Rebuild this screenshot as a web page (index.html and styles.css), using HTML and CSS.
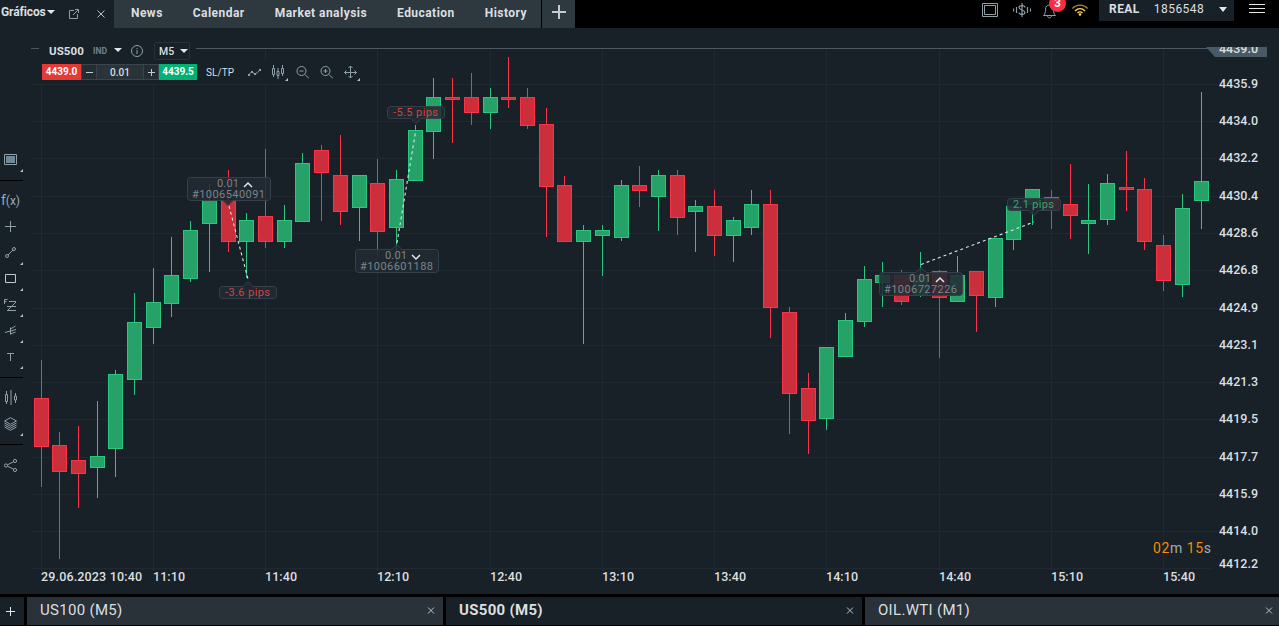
FILE: index.html
```
<!DOCTYPE html>
<html lang="es">

<head>
    <meta charset="UTF-8">
    <meta name="viewport" content="width=device-width, initial-scale=1.0">
    <title>US500 (M5)</title>
    <link rel="stylesheet" href="styles.css">
</head>

<body>
    <header class="topbar">
        <div class="tab-main">
            <span>Gráficos</span>
            <i class="caret"></i>
            <svg class="popout" width="10" height="10" viewBox="0 0 10 10"><path d="M5 1.5H.5v8h8V5M4 6l5-5M6 .5h3.5V4" /></svg>
            <svg class="close" width="8" height="8" viewBox="0 0 8 8"><path d="M.5.5l7 7M7.500.5l-7 7" /></svg>
        </div>
        <nav class="tabs">
            <a>News</a>
            <a>Calendar</a>
            <a>Market analysis</a>
            <a>Education</a>
            <a>History</a>
        </nav>
        <div class="tab-add"><svg width="14" height="14" viewBox="0 0 14 14"><path d="M7 0v14M0 7h14" /></svg></div>
        <div class="status">
            <svg width="16" height="14" viewBox="0 0 16 14"><path d="M.5.5h15v13H.5zM2.5 2.5h11v9h-11z" /></svg>
            <svg class="dollar" width="18" height="14" viewBox="0 0 18 14"><path d="M12 4.500C12 2 6 2 6 4.500S12 7 12 9.500 6 12 6 9.500M9 0v14M3.500 4v6M14.500 4v6M.5 5.500v3M17.500 5.500v3" /></svg>
            <div class="bell">
                <svg width="14" height="16" viewBox="0 0 14 16"><path d="M.5 12.500h12c-1.500-1.500-2-3-2-6C10.500 3.500 9 2 6.500 2s-4 1.500-4 4.500c0 3-.5 4.500-2 6zM4.500 13c.5 2.500 3.500 2.500 4 0" /></svg>
                <b class="badge">3</b>
            </div>
            <svg class="wifi" width="16" height="12" viewBox="0 0 16 12"><path d="M.5 4.500c4-4.500 11-4.500 15 0" /><path class="bright" d="M3 7c3-3 7-3 10 0M5.500 9c1.500-1.500 3.500-1.500 5 0" /><circle cx="8" cy="10.500" r="1.300" /></svg>
        </div>
        <div class="account"><span class="real">REAL</span><span class="number">1856548</span><i class="caret"></i></div>
        <div class="burger"><i></i><i></i><i></i></div>
    </header>

    <main class="workspace">
        <aside class="tools">
            <div class="tool more"><svg width="13" height="11" viewBox="0 0 13 11"><path d="M.5.5h12v10H.5z" /><path class="fill" d="M2 2h9v7H2z" /></svg></div>
            <hr>
            <div class="tool fx">f<small>(x)</small></div>
            <div class="tool"><svg width="11" height="11" viewBox="0 0 11 11"><path d="M5.500 0v11M0 5.500h11" /></svg></div>
            <div class="tool more"><svg width="11" height="11" viewBox="0 0 11 11"><circle cx="2" cy="9" r="1.500" /><circle cx="9" cy="2" r="1.500" /><path d="M3 8l5-5" /></svg></div>
            <div class="tool more"><svg class="light" width="11" height="9" viewBox="0 0 11 9"><path d="M.5.5h10v8H.5z" /></svg></div>
            <div class="tool more low"><svg width="13" height="12" viewBox="0 0 13 12"><path d="M.5 5V.5h3M.5 2.500h2M5 2.500h7M3 7.500h9M3 11.500h9M4 11l8-8" /></svg></div>
            <div class="tool more"><svg width="11" height="10" viewBox="0 0 11 10"><path d="M0 7.500l11-3M5.500 2.500v7M5.500 4l5-3M5.500 9l5-2" /></svg></div>
            <div class="tool more low"><svg width="7" height="8" viewBox="0 0 7 8"><path d="M0 .5h7M3.500 0v8" /></svg></div>
            <hr>
            <div class="tool"><svg width="12" height="15" viewBox="0 0 12 15"><path d="M1.500 1v3M1.500 12v2M.5 4.500h2v7h-2zM6 0v15M10.500 3v3M10.500 10v3M9.500 6h2v4h-2z" /></svg></div>
            <div class="tool more low"><svg width="13" height="14" viewBox="0 0 13 14"><path d="M6.500.7l6 3.300-6 3.300L.5 4zM.5 6l6 3.300 6-3.300M.5 8l6 3.300 6-3.300M.5 10l6 3.300 6-3.300" /></svg></div>
            <hr>
            <div class="tool low"><svg width="13" height="13" viewBox="0 0 13 13"><circle cx="2" cy="6.500" r="1.600" /><circle cx="11" cy="2" r="1.600" /><circle cx="11" cy="11" r="1.600" /><path d="M3.500 5.800l6-3M3.500 7.200l6 3" /></svg></div>
        </aside>

        <section class="chart-panel">
            <svg id="chart" class="chart" width="1256" height="566" viewBox="23 28 1256 566"></svg>
            <div class="chart-head">
                <div class="symbol-row">
                    <b class="symbol">US500</b>
                    <span class="kind">IND</span>
                    <i class="caret"></i>
                    <svg class="info" width="12" height="12" viewBox="0 0 12 12"><circle cx="6" cy="6" r="5.500" /><path d="M6 5v4M6 3v1" /></svg>
                    <div class="period">M5 <i class="caret"></i></div>
                </div>
                <div class="trade-row">
                    <b class="sell">4439.0</b>
                    <span class="step"><svg width="7" height="7" viewBox="0 0 7 7"><path d="M0 3.500h7" /></svg></span>
                    <span class="volume">0.01</span>
                    <span class="step"><svg width="7" height="7" viewBox="0 0 7 7"><path d="M0 3.500h7M3.500 0v7" /></svg></span>
                    <b class="buy">4439.5</b>
                    <span class="sltp">SL/TP</span>
                    <div class="icons">
                        <svg width="13" height="14" viewBox="0 0 13 14"><path d="M0 10.500l4-4 3 3 5.500-5" /><path class="fill" d="M0 9h2v2H0zM3 6h2v2H3zM6 8h2v2H6zM11 4h2v2h-2z" /></svg>
                        <div class="icon-more"><svg width="13" height="14" viewBox="0 0 13 14"><path d="M1.500 0v3M1.500 10v2M.5 3.500h2v6h-2zM6 3v3M6 11v3M5 6.500h2v4H5zM10.500 0v3M10.500 9v2M9.500 3.500h2v5h-2z" /></svg></div>
                        <svg width="13" height="14" viewBox="0 0 13 14"><circle cx="5.500" cy="6" r="4.500" /><path d="M9 9.500l4 4M3.500 6h4" /></svg>
                        <svg width="13" height="14" viewBox="0 0 13 14"><circle cx="5.500" cy="6" r="4.500" /><path d="M9 9.500l4 4M3.500 6h4M5.500 4v4" /></svg>
                        <div class="icon-more"><svg width="13" height="14" viewBox="0 0 13 14"><path d="M6.500 1v12M.5 7.500h12M4.500 3l2-2 2 2M4.500 11l2 2 2-2M2.500 5.500l-2 2 2 2M10.500 5.500l2 2-2 2" /></svg></div>
                    </div>
                </div>
            </div>
        </section>
    </main>

    <footer class="bottom-tabs">
        <div class="add"><svg width="9" height="9" viewBox="0 0 9 9"><path d="M4.500 0v9M0 4.500h9" /></svg></div>
        <div class="chart-tab"><span>US100 (M5)</span><svg width="8" height="8" viewBox="0 0 8 8"><path d="M1 .5l6 6M7 .5l-6 6" /></svg></div>
        <div class="chart-tab active"><span>US500 (M5)</span><svg width="8" height="8" viewBox="0 0 8 8"><path d="M1 .5l6 6M7 .5l-6 6" /></svg></div>
        <div class="chart-tab"><span>OIL.WTI (M1)</span><svg width="8" height="8" viewBox="0 0 8 8"><path d="M1 .5l6 6M7 .5l-6 6" /></svg></div>
    </footer>

    <script src="chart.js"></script>
</body>

</html>
```
FILE: styles.css
```
* {
    box-sizing: border-box;
}

body {
    margin: 0;
    height: 626px;
    display: flex;
    flex-direction: column;
    overflow: hidden;
    background-color: #172127;
    color: #dcdfe0;
    font-family: Roboto, "Liberation Sans", sans-serif;
}

svg {
    display: block;
    flex: none;
    fill: none;
    stroke: #8fa0aa;
}

.caret {
    border: 4px solid transparent;
    border-top-color: #e4e6e7;
    border-bottom: 0;
}

/* top bar */
.topbar {
    display: flex;
    height: 28px;
    flex: none;
    background-color: #000;
}

.tab-main {
    display: flex;
    align-items: center;
    width: 114px;
    padding: 0 0 4px 1px;
    background-color: #172127;
    font-size: 12px;
    font-weight: bold;
    letter-spacing: -0.1px;
}

.tab-main > .caret {
    margin-left: 1px;
}

.tab-main .popout {
    margin: 3px 0 0 14px;
}

.tab-main .close {
    margin: 3px 0 0 18px;
    stroke: #bcc3c7;
}

.tabs {
    display: flex;
    width: 427px;
    padding-left: 2px;
    background-color: #2d383f;
}

.tabs a {
    padding: 0 15px;
    font-size: 12px;
    font-weight: bold;
    line-height: 26px;
    letter-spacing: 0.46px;
    white-space: nowrap;
}

.tab-add {
    display: flex;
    justify-content: center;
    width: 33px;
    margin-left: 1px;
    padding-top: 5px;
    background-color: #2d383f;
}

.tab-add svg {
    stroke: #c6cacc;
    stroke-width: 2;
}

.status {
    display: flex;
    margin-left: auto;
    padding-top: 3px;
    gap: 15px;
}

.status .dollar {
    stroke-width: 1.2;
}

.bell {
    position: relative;
    margin-left: -3px;
}

.badge {
    position: absolute;
    left: 6px;
    top: -8px;
    width: 17px;
    height: 17px;
    border-radius: 50%;
    background-color: #fc2d42;
    color: #fff;
    font-size: 12px;
    line-height: 17px;
    text-align: center;
}

.status .wifi {
    margin-top: 1px;
    stroke: #b08c30;
    stroke-width: 1.4;
}

.status .wifi .bright {
    stroke: #ffd84d;
}

.status .wifi circle {
    fill: #ffd84d;
    stroke: none;
}

.account {
    display: flex;
    align-items: center;
    width: 135px;
    height: 21px;
    margin-left: 11px;
    padding: 0 7px 3px 10px;
    background-color: #172127;
    font-size: 12px;
    letter-spacing: 0.45px;
}

.account .real {
    font-weight: bold;
}

.account .number {
    margin-left: 14px;
}

.account .caret {
    margin: 1px 0 0 auto;
    border-top-width: 5px;
}

.burger {
    display: flex;
    flex-direction: column;
    gap: 3px;
    width: 16px;
    margin: 4px 14px 0 15px;
}

.burger i {
    height: 1px;
    background-color: #e4e6e7;
}

/* drawing tools */
.workspace {
    display: flex;
    height: 566px;
}

.tools {
    width: 23px;
    padding-top: 119px;
}

.tools hr {
    height: 1px;
    margin: 7px 0;
    border: 0;
    background-color: #000;
}

.tool {
    position: relative;
    display: flex;
    align-items: center;
    justify-content: center;
    height: 26px;
    padding: 0 2px 2px 0;
}

.tool.low {
    padding-bottom: 0;
}

.tool svg .fill {
    fill: #718896;
    stroke: none;
}

.tool svg.light {
    stroke: #c0c9ce;
}

.more::after,
.icon-more::after {
    content: "";
    position: absolute;
    right: 0;
    bottom: 1px;
    border-left: 3px solid transparent;
    border-bottom: 3px solid #b7c0c5;
}

.fx {
    align-items: baseline;
    color: #9caab3;
    font-size: 14px;
    line-height: 24px;
}

.fx small {
    font-size: 12px;
}

/* chart */
.chart-panel {
    position: relative;
    flex: 1;
}

.chart text {
    stroke: none;
}

.grid {
    stroke: #20292f;
}

.price-line {
    stroke: #4a5964;
}

.price-tag {
    fill: #4a5a65;
    stroke: none;
}

.axis text {
    fill: #dcdfe0;
    font-size: 12.5px;
    font-weight: 500;
}

.up {
    fill: #26a269;
    stroke: #2ac780;
}

.down {
    fill: #cc2f3c;
    stroke: #ff3347;
}

.note-box {
    fill: #212a33;
    fill-opacity: 0.87;
    stroke: #35414a;
}

.note-text {
    fill: #7c8388;
    font-size: 11px;
}

.note-text.loss {
    fill: #d04442;
}

.note-text.profit {
    fill: #35a56e;
}

.note-arrow {
    stroke: #e4e6e7;
    stroke-width: 1.5;
}

.trade-line {
    stroke: #dfe3e5;
    stroke-width: 1.1;
    stroke-dasharray: 3 3;
}

.timer {
    fill: #a0adb5;
    font-size: 14px;
}

.timer .digits {
    fill: #f58b0a;
}

.chart-head {
    position: absolute;
    left: 16px;
    top: 13px;
}

.symbol-row {
    display: flex;
    align-items: center;
    width: 157px;
    height: 20px;
    padding-left: 10px;
    background-color: #172127;
    font-size: 11.5px;
}

.symbol {
    width: 36px;
    letter-spacing: 0.1px;
}

.kind {
    width: 17px;
    margin-left: 8px;
    color: #72838e;
    font-size: 8.5px;
    font-weight: bold;
}

.symbol-row > .caret {
    margin: -2px 0 0 4px;
}

.info {
    margin-left: 9px;
}

.period {
    display: flex;
    align-items: center;
    gap: 6px;
    width: 36px;
    height: 18px;
    margin-left: 11px;
    padding-left: 4px;
    border: 1px solid #27323a;
    border-radius: 2px;
    font-size: 10.5px;
    font-weight: 500;
}

.trade-row {
    display: flex;
    align-items: center;
    width: 326px;
    height: 22px;
    padding: 3px 0 3px 3px;
    background-color: #172127;
    font-size: 10px;
}

.sell,
.buy {
    width: 39px;
    line-height: 16px;
    text-align: center;
    color: #fff;
    background-color: #e53935;
}

.buy {
    width: 38px;
    background-color: #00b173;
}

.step {
    display: flex;
    align-items: center;
    justify-content: center;
    width: 16px;
    height: 16px;
    border: 1px solid #3a444c;
    background-color: #242d34;
}

.step svg {
    stroke: #c6cbce;
}

.volume {
    width: 46px;
    height: 16px;
    line-height: 15px;
    border: solid #3a444c;
    border-width: 1px 0;
    background-color: #2a333a;
    text-align: center;
    font-weight: 500;
}

.sltp {
    margin-left: 9px;
    letter-spacing: 0.1px;
}

.icons {
    display: flex;
    gap: 11px;
    margin-left: 14px;
}

.icon-more {
    position: relative;
}

.icon-more::after {
    right: -3px;
    bottom: -2px;
}

.icons .fill {
    fill: #8fa0aa;
    stroke: none;
}

/* bottom tabs */
.bottom-tabs {
    display: flex;
    gap: 3px;
    height: 32px;
    padding: 3px 0 1px;
    background-color: #000;
}

.add {
    display: flex;
    align-items: center;
    justify-content: center;
    width: 24px;
    padding-right: 3px;
    background-color: #172127;
}

.add svg {
    stroke: #e4e6e7;
}

.chart-tab {
    display: flex;
    align-items: center;
    justify-content: space-between;
    width: 416px;
    padding: 0 8px 0 13px;
    background-color: #283238;
    font-size: 15px;
    line-height: 26px;
    letter-spacing: 0.3px;
}

.chart-tab:last-child {
    width: 414px;
    padding-right: 6px;
}

.chart-tab span {
    margin-bottom: 2px;
}

.chart-tab svg {
    stroke: #bcc3c7;
}

.chart-tab.active {
    background-color: #172127;
    font-weight: bold;
}
```
FILE: chart.js
```
const candles = [
    // x, high, body top, body bottom, low, direction
    [41, 360, 398, 447, 487, 'down'],
    [59, 432, 445, 472, 559, 'down'],
    [78, 426, 460, 474, 508, 'down'],
    [97, 401, 456, 468, 498, 'up'],
    [115, 370, 374, 449, 477, 'up'],
    [134, 293, 322, 380, 395, 'up'],
    [153, 268, 302, 328, 344, 'up'],
    [171, 237, 275, 304, 317, 'up'],
    [190, 221, 230, 279, 282, 'up'],
    [209, 184, 200, 224, 272, 'up'],
    [228, 170, 200, 242, 252, 'down'],
    [246, 213, 220, 242, 278, 'up'],
    [265, 149, 216, 242, 248, 'down'],
    [284, 205, 220, 242, 248, 'up'],
    [302, 153, 163, 222, 222, 'up'],
    [321, 145, 150, 173, 221, 'down'],
    [340, 135, 175, 212, 225, 'down'],
    [359, 175, 175, 208, 241, 'up'],
    [377, 159, 183, 232, 256, 'down'],
    [396, 170, 179, 228, 272, 'up'],
    [415, 125, 130, 181, 181, 'up'],
    [433, 78, 97, 132, 159, 'up'],
    [452, 78, 97, 100, 143, 'down'],
    [471, 73, 97, 113, 125, 'down'],
    [490, 88, 97, 113, 129, 'up'],
    [508, 57, 97, 100, 108, 'down'],
    [527, 88, 97, 126, 129, 'down'],
    [546, 108, 124, 187, 237, 'down'],
    [564, 176, 185, 242, 242, 'down'],
    [583, 225, 230, 242, 344, 'up'],
    [602, 225, 230, 236, 276, 'up'],
    [621, 180, 185, 238, 241, 'up'],
    [639, 166, 185, 191, 207, 'down'],
    [658, 170, 175, 197, 231, 'up'],
    [677, 170, 175, 218, 235, 'down'],
    [695, 200, 206, 212, 252, 'up'],
    [714, 190, 206, 236, 256, 'down'],
    [733, 217, 220, 236, 262, 'up'],
    [751, 190, 204, 228, 235, 'up'],
    [770, 190, 204, 308, 338, 'down'],
    [789, 307, 312, 394, 434, 'down'],
    [808, 373, 388, 421, 454, 'down'],
    [826, 347, 347, 419, 430, 'up'],
    [845, 313, 320, 357, 357, 'up'],
    [864, 266, 279, 322, 327, 'up'],
    [882, 262, 275, 283, 307, 'up'],
    [901, 270, 275, 302, 305, 'down'],
    [920, 252, 275, 296, 297, 'up'],
    [939, 270, 271, 298, 358, 'down'],
    [957, 256, 275, 302, 302, 'up'],
    [976, 271, 271, 296, 332, 'down'],
    [995, 238, 238, 298, 307, 'up'],
    [1013, 206, 206, 240, 250, 'up'],
    [1032, 189, 189, 205, 225, 'up'],
    [1051, 190, 197, 210, 229, 'down'],
    [1070, 164, 204, 216, 239, 'down'],
    [1088, 184, 220, 224, 254, 'up'],
    [1107, 174, 183, 220, 225, 'up'],
    [1126, 151, 187, 190, 211, 'down'],
    [1144, 178, 189, 242, 250, 'down'],
    [1163, 235, 245, 281, 291, 'down'],
    [1182, 194, 208, 285, 297, 'up'],
    [1201, 92, 181, 201, 229, 'up']
];

const prices = [
    [84, '4435.9'], [121, '4434.0'], [158, '4432.2'], [196, '4430.4'], [233, '4428.6'],
    [270, '4426.8'], [308, '4424.9'], [345, '4423.1'], [382, '4421.3'], [419, '4419.5'],
    [457, '4417.7'], [494, '4415.9'], [531, '4414.0'], [568, '4412.2']
];

const times = [
    [41, '29.06.2023 10:40'], [153, '11:10'], [265, '11:40'], [377, '12:10'], [490, '12:40'], [602, '13:10'],
    [714, '13:40'], [826, '14:10'], [939, '14:40'], [1051, '15:10'], [1163, '15:40']
];

// left, top, width, height, pointer x, pointer side
const notes = [
    { box: [187, 177, 83, 23, 228, 'bottom'], order: '#1006540091', arrow: 'up' },
    { box: [219, 286, 57, 12, 248, 'top'], pips: '-3.6 pips', result: 'loss' },
    { box: [387, 106, 57, 12, 416, 'bottom'], pips: '-5.5 pips', result: 'loss' },
    { box: [355, 249, 83, 23, 397, 'top'], order: '#1006601188', arrow: 'down' },
    { box: [879, 272, 83, 23, 921, 'top'], order: '#1006727226', arrow: 'up' },
    { box: [1007, 198, 53, 12, 1034, 'bottom'], pips: '2.1 pips', result: 'profit' }
];

function drawGrid() {
    let out = '<g class="grid">';
    prices.forEach(([y]) => {
        out += `<path d="M31 ${y + 0.5}H${y === 568 ? 1211 : 1217}" />`;
    });
    times.forEach(([x]) => {
        out += `<path d="M${x + 0.5} 48V571" />`;
    });
    return out + '</g>';
}

function drawCandle([x, high, top, bottom, low, direction]) {
    return `<g class="${direction}">
        <path d="M${x + 0.5} ${high}V${low}" />
        <rect x="${x - 6.5}" y="${top + 0.5}" width="14" height="${bottom - top - 1}" />
    </g>`;
}

function drawAxis() {
    let out = '<g class="axis">';
    prices.forEach(([y, label]) => {
        const baseline = y === 568 ? 568 : y + 4;
        out += `<text x="1219" y="${baseline}" textLength="39">${label}</text>`;
    });
    times.forEach(([x, label]) => {
        out += `<text x="${x}" y="581" textLength="${label.length > 5 ? 101 : 32}">${label}</text>`;
    });
    return out + '</g>';
}

function drawNote(note) {
    const [x, y, w, h, px, side] = note.box;
    const r = x + w + 0.5;
    const b = y + h + 0.5;
    const l = x + 0.5;
    const t = y + 0.5;
    const topEdge = side === 'top' ? `H${px - 5}L${px} ${t - 5}L${px + 5} ${t}` : '';
    const bottomEdge = side === 'bottom' ? `H${px + 5}L${px} ${b + 5}L${px - 5} ${b}` : '';
    let out = `<path class="note-box" d="M${l + 3} ${t}${topEdge}H${r - 3}q3 0 3 3V${b - 3}q0 3-3 3${bottomEdge}H${l + 3}q-3 0-3-3V${t + 3}q0-3 3-3z" />`;

    if (note.pips) {
        out += `<text class="note-text ${note.result}" x="${x + 6}" y="${y + 10}" textLength="${w - 12}">${note.pips}</text>`;
        return out;
    }
    const ax = x + 57;
    const ay = y + 10;
    out += `<text class="note-text" x="${x + 30}" y="${y + 10}" textLength="22">0.01</text>`;
    out += `<text class="note-text" x="${x + 5}" y="${y + 21}" textLength="73">${note.order}</text>`;
    out += note.arrow === 'up'
        ? `<path class="note-arrow" d="M${ax} ${ay}l4-4 4 4" />`
        : `<path class="note-arrow" d="M${ax} ${ay - 4}l4 4 4-4" />`;
    return out;
}

document.getElementById('chart').innerHTML = `
    <clipPath id="plot"><rect x="23" y="47" width="1256" height="547" /></clipPath>
    ${drawGrid()}
    <path class="price-line" d="M31 48.5H1210" />
    ${candles.map(drawCandle).join('')}
    ${notes.map(drawNote).join('')}
    <path class="trade-line" d="M229 206L248 279M397 243L415.500 132M921 264.500L1034 222" />
    ${drawAxis()}
    <g class="axis" clip-path="url(#plot)">
        <path class="price-tag" d="M1206 47H1267V57H1215z" />
        <text x="1219" y="53" textLength="39">4439.0</text>
    </g>
    <text class="timer" x="1153" y="553" textLength="58"><tspan class="digits">02</tspan>m <tspan class="digits">15</tspan>s</text>
`;
```
